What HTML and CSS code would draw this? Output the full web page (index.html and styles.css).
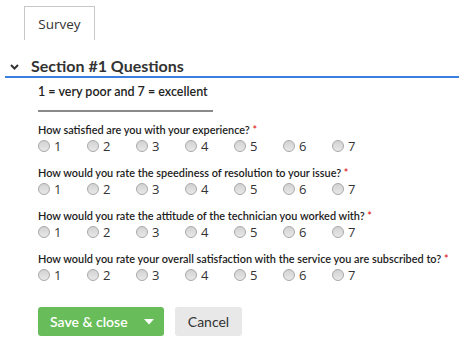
FILE: index.html
```html
<!DOCTYPE html>
<html lang="en">
<head>
    <meta charset="UTF-8">
    <meta name="viewport" content="width=device-width, initial-scale=1.0">
    <title>Survey</title>
    <link rel="stylesheet" href="styles.css">
</head>
<body>

<div class="tabs">
    <div class="tab">Survey</div>
</div>

<section class="section">
    <h2 class="section-title">
        <svg class="chevron" width="9" height="6" viewBox="0 0 9 6"><path d="M1 1 L4.5 4.5 L8 1" fill="none" stroke="#333" stroke-width="2"/></svg>
        Section #1 Questions
    </h2>

    <div class="section-body">
        <p class="scale-note">1 = very poor and 7 = excellent</p>

        <div class="question">
            <p class="question-text">How satisfied are you with your experience? <span class="req">*</span></p>
            <div class="options">
                <label><input type="radio" name="q1" value="1">1</label>
                <label><input type="radio" name="q1" value="2">2</label>
                <label><input type="radio" name="q1" value="3">3</label>
                <label><input type="radio" name="q1" value="4">4</label>
                <label><input type="radio" name="q1" value="5">5</label>
                <label><input type="radio" name="q1" value="6">6</label>
                <label><input type="radio" name="q1" value="7">7</label>
            </div>
        </div>

        <div class="question">
            <p class="question-text">How would you rate the speediness of resolution to your issue? <span class="req">*</span></p>
            <div class="options">
                <label><input type="radio" name="q2" value="1">1</label>
                <label><input type="radio" name="q2" value="2">2</label>
                <label><input type="radio" name="q2" value="3">3</label>
                <label><input type="radio" name="q2" value="4">4</label>
                <label><input type="radio" name="q2" value="5">5</label>
                <label><input type="radio" name="q2" value="6">6</label>
                <label><input type="radio" name="q2" value="7">7</label>
            </div>
        </div>

        <div class="question">
            <p class="question-text">How would you rate the attitude of the technician you worked with? <span class="req">*</span></p>
            <div class="options">
                <label><input type="radio" name="q3" value="1">1</label>
                <label><input type="radio" name="q3" value="2">2</label>
                <label><input type="radio" name="q3" value="3">3</label>
                <label><input type="radio" name="q3" value="4">4</label>
                <label><input type="radio" name="q3" value="5">5</label>
                <label><input type="radio" name="q3" value="6">6</label>
                <label><input type="radio" name="q3" value="7">7</label>
            </div>
        </div>

        <div class="question">
            <p class="question-text">How would you rate your overall satisfaction with the service you are subscribed to? <span class="req">*</span></p>
            <div class="options">
                <label><input type="radio" name="q4" value="1">1</label>
                <label><input type="radio" name="q4" value="2">2</label>
                <label><input type="radio" name="q4" value="3">3</label>
                <label><input type="radio" name="q4" value="4">4</label>
                <label><input type="radio" name="q4" value="5">5</label>
                <label><input type="radio" name="q4" value="6">6</label>
                <label><input type="radio" name="q4" value="7">7</label>
            </div>
        </div>

        <div class="actions">
            <button class="btn btn-save" type="button">
                <span>Save &amp; close</span>
                <svg class="caret" width="10" height="6" viewBox="0 0 10 6"><path d="M0 0 H10 L5 5.5 Z" fill="#fff"/></svg>
            </button>
            <button class="btn btn-cancel" type="button">Cancel</button>
        </div>
    </div>
</section>

</body>
</html>
```

FILE: styles.css
```css
body {
    margin: 0;
    font-family: Lato, "Open Sans", Arial, sans-serif;
    color: #2b2b2b;
    background: #fff;
}
.tabs {
    padding: 6px 0 0 24px;
}
.tab {
    width: 71px;
    height: 34px;
    border: 1px solid #c8c8c8;
    border-bottom: none;
    box-sizing: border-box;
    text-align: center;
    line-height: 34px;
    font-family: "Open Sans", Arial, sans-serif;
    font-size: 13.5px;
    color: #333;
}
.section-title {
    margin: 16px 0 0 5px;
    padding-left: 5px;
    display: flex;
    align-items: center;
    gap: 12px;
    font-size: 16px;
    line-height: 20px;
    font-weight: 700;
    color: #333;
    border-bottom: 2px solid #3c7ee0;
}
.chevron {
    margin-top: 2px;
}
.section-body {
    padding-left: 38px;
}
.scale-note {
    display: inline-block;
    margin: 5px 0 0;
    padding: 0 5px 9px 0;
    font-size: 12.5px;
    line-height: 18px;
    font-weight: 600;
    color: #222;
    border-bottom: 2px solid #8a8a8a;
}
.question {
    margin-top: 10px;
}
.question-text {
    margin: 0;
    font-size: 10.9px;
    line-height: 15px;
    font-weight: 600;
    color: #1c1c1c;
}
.req {
    color: #e02020;
}
.options {
    display: flex;
    height: 18px;
}
.options label {
    width: 49px;
    display: flex;
    align-items: center;
    font-family: "Open Sans", Arial, sans-serif;
    font-size: 13px;
    color: #333;
}
.options input {
    appearance: none;
    -webkit-appearance: none;
    width: 12px;
    height: 12px;
    margin: 0 4px 0 0;
    border: 1px solid #a8a8a8;
    border-radius: 50%;
    background: linear-gradient(#d2d2d2, #e8e8e8);
}
.actions {
    display: flex;
    gap: 11px;
    margin-top: 23px;
}
.btn {
    height: 29px;
    border: none;
    border-radius: 3px;
    font-family: Lato, Arial, sans-serif;
    font-size: 14px;
    padding: 0;
    cursor: pointer;
}
.btn-save {
    width: 126px;
    background: #68bd5a;
    color: #fff;
    display: flex;
    align-items: center;
    justify-content: space-between;
    padding: 0 10px 0 12px;
    font-weight: 600;
}
.btn-cancel {
    width: 67px;
    background: #e8e8e8;
    color: #333;
}
```
